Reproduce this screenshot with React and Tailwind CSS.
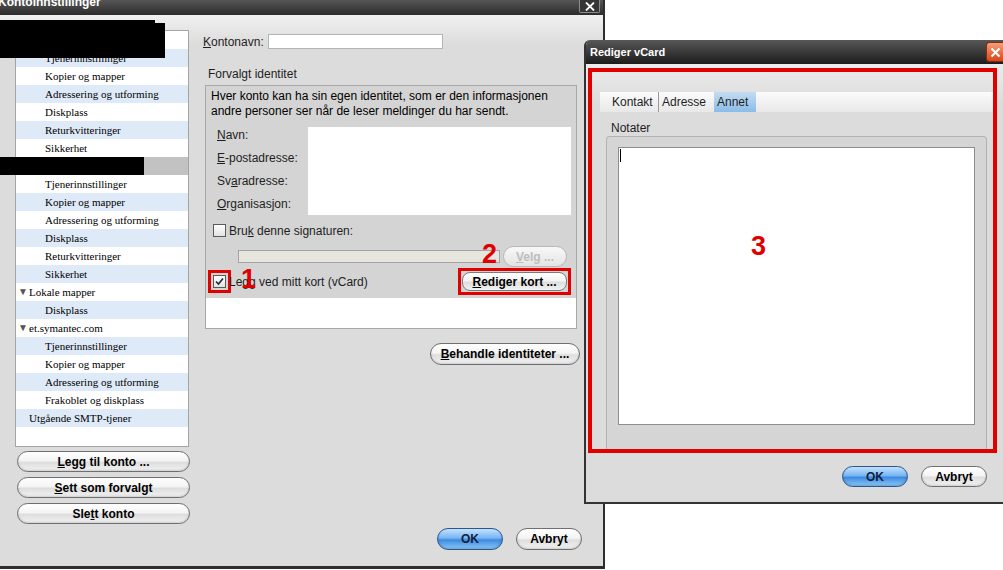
import React from 'react';

const tree = [
  { t: '', kind: 'acct' },
  { t: 'Tjenerinnstillinger', kind: 'sub' },
  { t: 'Kopier og mapper', kind: 'sub' },
  { t: 'Adressering og utforming', kind: 'sub' },
  { t: 'Diskplass', kind: 'sub' },
  { t: 'Returkvitteringer', kind: 'sub' },
  { t: 'Sikkerhet', kind: 'sub' },
  { t: '', kind: 'selected' },
  { t: 'Tjenerinnstillinger', kind: 'sub' },
  { t: 'Kopier og mapper', kind: 'sub' },
  { t: 'Adressering og utforming', kind: 'sub' },
  { t: 'Diskplass', kind: 'sub' },
  { t: 'Returkvitteringer', kind: 'sub' },
  { t: 'Sikkerhet', kind: 'sub' },
  { t: 'Lokale mapper', kind: 'folder' },
  { t: 'Diskplass', kind: 'sub' },
  { t: 'et.symantec.com', kind: 'folder' },
  { t: 'Tjenerinnstillinger', kind: 'sub' },
  { t: 'Kopier og mapper', kind: 'sub' },
  { t: 'Adressering og utforming', kind: 'sub' },
  { t: 'Frakoblet og diskplass', kind: 'sub' },
  { t: 'Utgående SMTP-tjener', kind: 'top' },
];

const pill =
  'rounded-full border border-[#6f6f6f] bg-[linear-gradient(#ffffff_0%,#f4f4f4_45%,#dedede_55%,#f2f2f2_100%)] shadow-[inset_0_-1px_2px_rgba(0,0,0,0.15)] text-[12px] font-bold text-black flex items-center justify-center';
const blue =
  'rounded-full border border-[#2c5690] bg-[linear-gradient(#c4e2ff_0%,#77b5f2_45%,#3d8ae0_55%,#8ccaf9_100%)] shadow-[inset_0_-1px_2px_rgba(0,0,0,0.2)] text-[12px] font-bold text-[#14203a] flex items-center justify-center';

function TreeRow({ row, i }) {
  let bg = i % 2 === 1 ? 'bg-[#dfeaf8]' : 'bg-white';
  if (row.kind === 'selected') bg = 'bg-[#c2c2c2]';
  return (
    <div className={`h-[18px] leading-[18px] text-[11px] text-black whitespace-nowrap flex items-center ${bg}`}>
      {row.kind === 'sub' && <span className="pl-[29px]">{row.t}</span>}
      {row.kind === 'top' && <span className="pl-[13px]">{row.t}</span>}
      {row.kind === 'folder' && (
        <>
          <span className="pl-[2px] text-[10px] text-[#555] w-[13px]">▼</span>
          <span>{row.t}</span>
        </>
      )}
    </div>
  );
}

function Check({ checked }) {
  return (
    <div className="w-[13px] h-[13px] border border-[#5a5a5a] bg-[linear-gradient(#ffffff,#e2e2e2)] flex items-center justify-center">
      {checked && (
        <svg width="9" height="9" viewBox="0 0 9 9">
          <path d="M1 4.5 L3.5 7 L8 1.5" stroke="#1a2a3a" strokeWidth="1.6" fill="none" />
        </svg>
      )}
    </div>
  );
}

export default function App() {
  return (
    <div className="relative w-[1003px] h-[570px] bg-white overflow-hidden font-['Liberation_Sans',Arial,sans-serif]">
      {/* main window */}
      <div className="absolute left-0 top-0 w-[605px] h-[569px] border-r-[2px] border-b-[3px] border-[#2e2e2e] flex flex-col">
        <div className="relative h-[15px] bg-[linear-gradient(#565656,#2c2c2c)] overflow-hidden">
          <div className="-mt-[5px] -ml-[2px] text-[12px] font-bold text-white leading-[14px]">Kontoinnstillinger</div>
          <div className="absolute right-[3px] top-0 w-[21px] h-[13px] border border-t-0 border-[#8a8a8a] bg-[#363636] rounded-b-[2px] flex items-center justify-center">
            <svg width="10" height="9" viewBox="0 0 10 9">
              <path d="M1 0.5 L9 8.5 M9 0.5 L1 8.5" stroke="#fff" strokeWidth="1.8" />
            </svg>
          </div>
        </div>
        <div className="flex-1 flex bg-[linear-gradient(#f0f0f0_0px,#dcdcdc_30px)]">
          {/* left column */}
          <div className="w-[195px] flex flex-col pl-[15px] pt-[15px]">
            <div className="w-[174px] h-[417px] bg-white border border-[#a4a4a4] font-['Liberation_Serif','Times_New_Roman',serif] overflow-hidden">
              {tree.map((r, i) => (
                <TreeRow key={i} row={r} i={i} />
              ))}
            </div>
            <div className="mt-[4px] ml-[2px] flex flex-col gap-[5px]">
              <div className={`${pill} w-[173px] h-[21px]`}>
                <span><u>L</u>egg til konto ...</span>
              </div>
              <div className={`${pill} w-[173px] h-[21px]`}>
                <span><u>S</u>ett som forvalgt</span>
              </div>
              <div className={`${pill} w-[173px] h-[21px]`}>
                <span>Sle<u>t</u>t konto</span>
              </div>
            </div>
          </div>
          {/* right column */}
          <div className="flex-1 flex flex-col pl-[8px] pt-[19px] text-[12px] text-[#1e1e1e]">
            <div className="h-[15px] flex items-center">
              <span className="w-[65px]"><u>K</u>ontonavn:</span>
              <div className="w-[175px] h-[15px] bg-white border border-[#b4b4b4]" />
            </div>
            <div className="mt-[18px] ml-[5px] leading-[14px]">Forvalgt identitet</div>
            <div className="mt-[4px] ml-[2px] w-[372px] h-[244px] border border-[#a8a8a8] bg-[#d4d4d4] flex flex-col">
              <div className="px-[5px] pt-[3px] leading-[15px] text-black">
                Hver konto kan ha sin egen identitet, som er den informasjonen
                <br />
                andre personer ser når de leser meldinger du har sendt.
              </div>
              <div className="mt-[5px] flex items-start">
                <div className="w-[102px] pl-[11px] flex flex-col">
                  <span className="h-[23px] leading-[23px]"><u>N</u>avn:</span>
                  <span className="h-[23px] leading-[23px]"><u>E</u>-postadresse:</span>
                  <span className="h-[23px] leading-[23px]">Sv<u>a</u>radresse:</span>
                  <span className="h-[23px] leading-[23px]"><u>O</u>rganisasjon:</span>
                </div>
                <div className="mt-[3px] w-[263px] h-[88px] bg-white" />
              </div>
              <div className="mt-[8px] pl-[7px] h-[13px] flex items-center">
                <Check />
                <span className="ml-[3px]">Bru<u>k</u> denne signaturen:</span>
              </div>
              <div className="mt-[9px] h-[21px] flex items-center">
                <div className="ml-[32px] w-[262px] h-[13px] bg-[#e6e6de] border border-[#a4a4a4]" />
                <div className="ml-[3px] w-[64px] h-[21px] rounded-full border border-[#b8b8b8] bg-[linear-gradient(#f8f8f8,#e4e4e4)] text-[#bdbdbd] font-bold flex items-center justify-center">
                  <span><u>V</u>elg ...</span>
                </div>
              </div>
              <div className="mt-[5px] h-[19px] flex items-center">
                <div className="ml-[7px] outline-[3px] outline-solid outline-[#e00000] outline-offset-[2px]">
                  <Check checked />
                </div>
                <span className="ml-[3px]">Le<u>g</u>g ved mitt kort (vCard)</span>
                <div className="ml-auto mr-[5px] border-[3px] border-[#e00000] p-[1px] shrink-0">
                  <div className="w-[105px] h-[19px] rounded-[8px] border border-[#7a7a7a] bg-[linear-gradient(#ffffff_0%,#f4f4f4_45%,#dedede_55%,#f2f2f2_100%)] text-[12px] font-bold text-black flex items-center justify-center">
                    <span><u>R</u>ediger kort ...</span>
                  </div>
                </div>
              </div>
              <div className="mt-auto h-[30px] bg-white" />
            </div>
            <div className={`${pill} mt-[14px] ml-[227px] w-[150px] h-[22px]`}>
              <span><u>B</u>ehandle identiteter ...</span>
            </div>
            <div className="mt-auto pb-[16px] pr-[21px] flex justify-end gap-[13px]">
              <div className={`${blue} w-[66px] h-[22px]`}>OK</div>
              <div className={`${pill} w-[66px] h-[22px]`}>Avbryt</div>
            </div>
          </div>
        </div>
      </div>

      {/* redaction boxes */}
      <div className="absolute left-0 top-[20px] w-[155px] h-[30px] bg-black" />
      <div className="absolute left-0 top-[23px] w-[165px] h-[35px] bg-black" />
      <div className="absolute left-0 top-[157px] w-[144px] h-[18px] bg-black" />

      {/* annotations on main window */}
      <div className="absolute left-[241px] top-[266px] text-[27px] leading-[27px] font-bold text-[#e00000]">1</div>
      <div className="absolute left-[482px] top-[241px] text-[27px] leading-[27px] font-bold text-[#e00000]">2</div>

      {/* vCard window */}
      <div className="absolute left-[584px] top-[40px] w-[419px] h-[464px] border-l-[2px] border-b-[2px] border-[#333] rounded-tl-[6px] overflow-hidden bg-[#dcdcdc] flex flex-col">
        <div className="h-[24px] bg-[linear-gradient(#585858,#1c1c1c)] flex items-center justify-between">
          <span className="pl-[4px] text-[11px] font-bold text-white">Rediger vCard</span>
          <div className="w-[17px] h-[20px] rounded-l-[3px] border border-r-0 border-[#8a2a10] bg-[linear-gradient(#f4a07a,#d8461c)] flex items-center justify-center">
            <svg width="11" height="11" viewBox="0 0 11 11">
              <path d="M1.5 1.5 L9.5 9.5 M9.5 1.5 L1.5 9.5" stroke="#fff" strokeWidth="2" />
            </svg>
          </div>
        </div>
        <div className="flex-1 flex flex-col bg-[linear-gradient(#ececec_0px,#dcdcdc_40px)] text-[12px] text-[#1e1e1e]">
          <div className="mt-[28px] ml-[14px] mr-[6px] h-[20px] bg-[linear-gradient(#fbfbfb,#e8e8e8)] flex items-stretch">
            <div className="ml-[8px] w-[51px] pl-[4px] flex items-center border-r border-[#9a9a9a]">Kontakt</div>
            <div className="w-[55px] pl-[3px] flex items-center">Adresse</div>
            <div className="w-[42px] pl-[3px] flex items-center bg-[linear-gradient(#c4dcf2,#8bbce8)]">Annet</div>
          </div>
          <div className="mt-[9px] ml-[25px] leading-[14px]">Notater</div>
          <div className="mt-[1px] ml-[20px] w-[381px] h-[316px] rounded-t-[4px] border border-b-0 border-[#b2b2b2] bg-[#d5d5d5] pt-[10px] pl-[11px]">
            <div className="w-[357px] h-[278px] bg-white border border-[#8e8e8e] pt-[1px] pl-[1px]">
              <div className="w-[1px] h-[13px] bg-black" />
            </div>
          </div>
          <div className="mt-[14px] pr-[16px] flex justify-end gap-[13px]">
            <div className={`${blue} w-[66px] h-[21px]`}>OK</div>
            <div className={`${pill} w-[66px] h-[21px]`}>Avbryt</div>
          </div>
        </div>
      </div>

      {/* annotations on vCard window */}
      <div className="absolute left-[588px] top-[68px] w-[409px] h-[385px] border-[4px] border-[#e00000] pointer-events-none" />
      <div className="absolute left-[751px] top-[233px] text-[27px] leading-[27px] font-bold text-[#e00000]">3</div>
    </div>
  );
}
